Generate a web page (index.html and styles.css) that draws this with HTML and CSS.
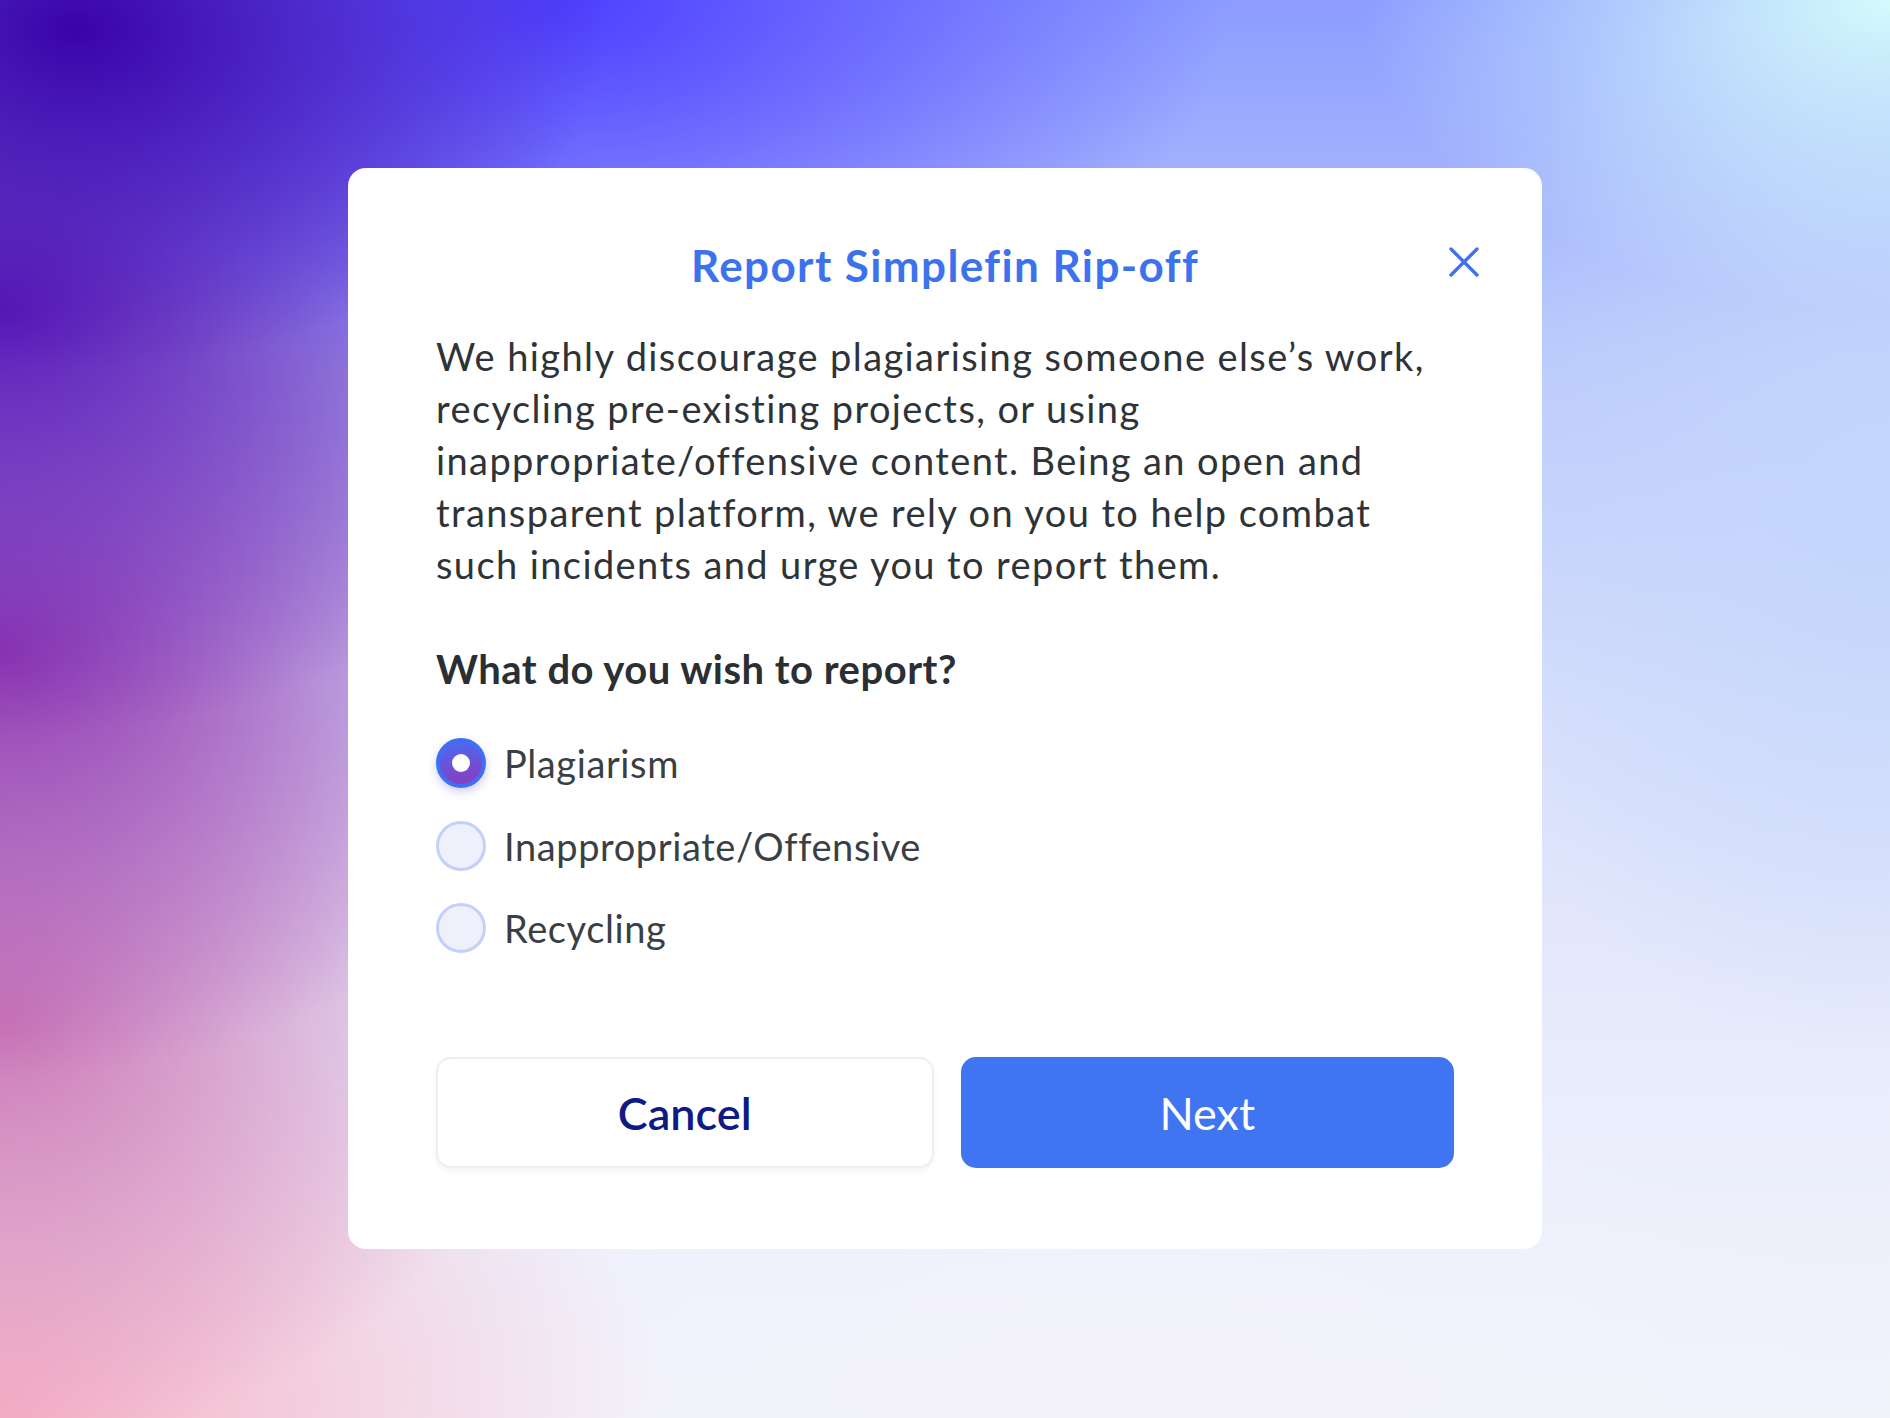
FILE: index.html
```html
<!DOCTYPE html>
<html lang="en">
<head>
<meta charset="utf-8">
<title>Report Simplefin Rip-off</title>
<link rel="stylesheet" href="styles.css">
</head>
<body>
<div class="modal">
  <div class="modal-header">
    <h1 class="title">Report Simplefin Rip-off</h1>
    <button class="close" aria-label="Close">
      <svg width="30" height="30" viewBox="0 0 30 30"><path d="M2 2 L28 28 M28 2 L2 28" stroke="#3f72ee" stroke-width="3.4" stroke-linecap="round" fill="none"/></svg>
    </button>
  </div>
  <p class="body-text">We highly discourage plagiarising someone else’s work, recycling pre-existing projects, or using inappropriate/offensive content. Being an open and transparent platform, we rely on you to help combat such incidents and urge you to report them.</p>
  <h2 class="question">What do you wish to report?</h2>
  <div class="options">
    <label class="option"><span class="radio selected"><span class="dot"></span></span><span class="label">Plagiarism</span></label>
    <label class="option"><span class="radio"></span><span class="label">Inappropriate/Offensive</span></label>
    <label class="option"><span class="radio"></span><span class="label">Recycling</span></label>
  </div>
  <div class="actions">
    <button class="btn btn-cancel">Cancel</button>
    <button class="btn btn-next">Next</button>
  </div>
</div>
</body>
</html>
```
FILE: styles.css
```css
html, body {
  margin: 0;
  padding: 0;
}
body {
  width: 1890px;
  height: 1418px;
  overflow: hidden;
  font-family: "Lato", "Noto Sans", sans-serif;
  background:
    radial-gradient(ellipse 28% 24% at 4% 2%, #3a02a8 0%, rgba(58,2,168,0) 100%),
    radial-gradient(ellipse 35% 28% at 30% 0%, #4f40ff 0%, rgba(79,64,255,0) 100%),
    radial-gradient(ellipse 28% 22% at 100% 0%, #d4fbfb 0%, rgba(212,251,251,0) 100%),
    radial-gradient(ellipse 34% 30% at 0% 22%, #5a1ab8 0%, rgba(90,26,184,0) 100%),
    radial-gradient(ellipse 32% 30% at 0% 46%, #9238b0 0%, rgba(146,56,176,0) 100%),
    radial-gradient(ellipse 28% 30% at 0% 72%, #cc78b6 0%, rgba(204,120,182,0) 100%),
    radial-gradient(ellipse 35% 30% at 0% 100%, #f6afc4 0%, rgba(246,175,196,0) 100%),
    radial-gradient(ellipse 40% 25% at 60% 100%, #f4f3fb 0%, rgba(244,243,251,0) 100%),
    radial-gradient(ellipse 25% 40% at 100% 35%, #c4d6fc 0%, rgba(196,214,252,0) 100%),
    linear-gradient(180deg, #8c9cff 0%, #b9c8fb 25%, #d8e0fb 50%, #e9ecfb 75%, #f2f3fb 100%);
}
.modal {
  box-sizing: border-box;
  width: 1194px;
  margin: 168px auto 0;
  padding: 71px 88px 81px;
  background: #ffffff;
  border-radius: 18px;
}
.modal-header {
  position: relative;
  text-align: center;
}
.title {
  margin: 0;
  font-size: 44px;
  line-height: 52px;
  font-weight: 700;
  color: #3d72ee;
  letter-spacing: 1.4px;
}
.close {
  position: absolute;
  right: -25px;
  top: 8px;
  width: 30px;
  height: 30px;
  padding: 0;
  border: 0;
  background: none;
  cursor: pointer;
}
.close svg { display: block; }
.body-text {
  max-width: 1005px;
  margin: 39px 0 0;
  font-size: 38px;
  line-height: 52px;
  color: #2e3337;
  letter-spacing: 1.4px;
}
.question {
  margin: 55px 0 0;
  font-size: 40px;
  line-height: 48px;
  font-weight: 700;
  color: #2a2f33;
  letter-spacing: 0.5px;
}
.options {
  margin-top: 45px;
  display: flex;
  flex-direction: column;
  gap: 32.5px;
}
.option {
  display: flex;
  align-items: center;
  gap: 18px;
  height: 50px;
}
.radio {
  box-sizing: border-box;
  width: 50px;
  height: 50px;
  border-radius: 50%;
  background: #eef1fc;
  border: 3px solid #c3d1f8;
  display: flex;
  align-items: center;
  justify-content: center;
  flex: none;
}
.radio.selected {
  border: 4px solid #3f6ff4;
  background: linear-gradient(170deg, #4a6af0 5%, #8c3cc0 95%);
  box-shadow: 0 4px 10px rgba(70, 60, 200, 0.25);
}
.dot {
  width: 18px;
  height: 18px;
  border-radius: 50%;
  background: #ffffff;
}
.label {
  font-size: 38px;
  line-height: 48px;
  color: #3a3f44;
  letter-spacing: 0.6px;
}
.actions {
  margin-top: 104px;
  display: flex;
  gap: 27px;
}
.btn {
  flex: 1;
  height: 111px;
  border-radius: 15px;
  font-family: "Lato", "Noto Sans", sans-serif;
  font-size: 45px;
  cursor: pointer;
}
.btn-cancel {
  background: #ffffff;
  border: 2px solid #eceef1;
  box-shadow: 0 3px 6px rgba(0, 0, 0, 0.05);
  color: #0f1b85;
  font-weight: 600;
}
.btn-next {
  background: #4075f2;
  border: 0;
  color: #ffffff;
  font-weight: 400;
}
```
